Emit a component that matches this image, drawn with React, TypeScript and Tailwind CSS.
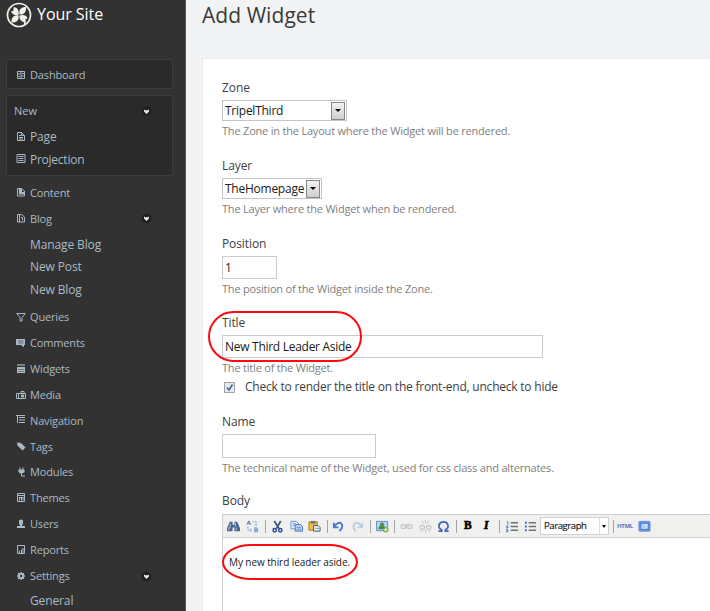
import type { ReactNode } from "react";

function Icon({ children }: { children: ReactNode }) {
  return (
    <svg width="11" height="11" viewBox="0 0 11 11" className="-mr-px shrink-0" fill="none" stroke="#a9bac5" strokeWidth="1">
      {children}
    </svg>
  );
}

const icons: Record<string, ReactNode> = {
  dashboard: <path d="M1.500 1.500h7v7h-7zM5 1.500v7M2 4h2.500M5.500 6h3M2.500 6.500h1.500M6 3.500h2" />,
  page: <path d="M1.500.500h4l3 3v5h-7zM5.500.500v3h3M3 3.500h2M3 5.500h4M3 7h4" />,
  projection: <path d="M1 .500h8v8H1zM2.500 2.500h5M2.500 4.500h5M2.500 6.500h5" />,
  content: (
    <>
      <path d="M1.500 1.500h4l3 2.500v5h-7z" />
      <path d="M3 2h3v3h2v2.500H3z" fill="#a9bac5" stroke="none" />
    </>
  ),
  blog: <path d="M1.500 1.500h4l3 2.500v5h-7zM3.500 2v7M5 4.500h1.500v3" />,
  queries: <path d="M.700 1.500h8.600L6 5.500v3.500H4V5.500z" />,
  comments: (
    <>
      <path d="M0 1h9v6H8v2.500L5 7H0z" fill="#a9bac5" stroke="none" />
      <path d="M2 3h5.500M2 5h5.500" stroke="#606c73" />
    </>
  ),
  widgets: (
    <>
      <path d="M1 1h8" strokeWidth="1.200" />
      <path d="M1 3h8v6H1z" fill="#a9bac5" stroke="none" />
      <path d="M2 5.500h6M2 7.500h6" stroke="#6c7b83" />
    </>
  ),
  media: (
    <>
      <path d="M.500 3.500h9v5H.500zM2.500 3v5.500M5 3V1.500h3V3" />
      <circle cx="6.500" cy="6" r="1.300" fill="#a9bac5" />
    </>
  ),
  navigation: <path d="M1.500 0v8M0 .500h9M3 2.500h6M3 5h6M3 7.500h6" />,
  tags: <path d="M1 1.500l4 .500 4.500 4.500L6.500 9.500l-5-5z" fill="#a9bac5" stroke="none" />,
  modules: (
    <>
      <path d="M4 .500v3M7 .500v3M5.500 6.500v2.500h3.500" />
      <path d="M2.500 2.500h6v2.500L6.500 6.500h-2.500L2.500 5z" fill="#a9bac5" stroke="none" />
    </>
  ),
  themes: <path d="M1.500 .500h7v8h-7zM2 2.500h6M3 4.500h4.500M3.500 4.500v3M5.500 4.500v3M7 4.500v3" />,
  users: <path d="M3 1.500Q5 -.500 7 1.500v3.500L6 6v1h3v2H1V7h3V6L3 5z" fill="#a9bac5" stroke="none" />,
  reports: (
    <>
      <path d="M1.500 .500h7v8h-7z" />
      <path d="M3.500 5.500v3M5.500 4.500v4M7 3v5.500" />
    </>
  ),
  settings: (
    <>
      <circle cx="5" cy="5" r="2.200" strokeWidth="2" />
      <path d="M5 1v2M5 7v2M1 5h2M7 5h2M2.100 2.100l1.400 1.400M6.500 6.500l1.400 1.400M7.900 2.100L6.500 3.500M3.500 6.500L2.100 7.900" strokeWidth="1.300" />
    </>
  ),
};

function Toggle() {
  return (
    <svg width="11" height="11" viewBox="0 0 11 11" className="ml-auto">
      <circle cx="5.500" cy="5.500" r="4.900" fill="#202023" />
      <path d="M3 3.500l1.300.700h2.400l1.300-.700v2L5.500 8 3 5.500z" fill="#e5e7e8" />
    </svg>
  );
}

function NavItem({ icon, label, toggle, className = "h-[25.850px] text-[11px]" }: { icon: string; label: string; toggle?: boolean; className?: string }) {
  return (
    <div className={`flex items-center pl-[16px] pr-[33px] tracking-[-.15px] ${className}`}>
      <Icon>{icons[icon]}</Icon>
      <span className="ml-1">{label}</span>
      {toggle && <Toggle />}
    </div>
  );
}

function SubItem({ label, className = "h-[22.500px]" }: { label: string; className?: string }) {
  return <div className={`flex items-center pl-[30px] text-[12px] tracking-[-.12px] ${className}`}>{label}</div>;
}

function Logo() {
  return (
    <svg width="26" height="26" viewBox="0 0 26 26">
      <circle cx="13" cy="13" r="11.500" fill="none" stroke="#f0f1e9" strokeWidth="1.700" />
      <g fill="#f0f1e9">
        <path d="M12.500 13C9.500 14 6 12.500 5 9.500c1-.5 2-.5 2.500-.5-.300-1 0-3 .500-4 4 1 5.500 4 4.500 8z" />
        <path d="M13.500 12.500c-1-5 1.500-7.500 6.500-7.500 .500 4.500-1.500 8-6.500 7.500z" />
        <path d="M12.500 13.500c1 4.500-2 7.500-7 7-.500-4.500 2.500-8 7-7z" />
        <path d="M13.500 13.500c4-1.500 7 0 8 2.500-.500 1-1 1-2 1 .500 1.500 0 2.500-.500 3.500-3.500-.500-6-3-5.500-7z" />
      </g>
      <path d="M17.500 18q2.500 2 1 5" fill="none" stroke="#f0f1e9" strokeWidth="1.500" />
    </svg>
  );
}

function Sidebar() {
  return (
    <aside className="h-[611px] w-[186px] shrink-0 overflow-hidden border-r border-[#56575a] bg-[#323232] text-[#a9bac5]">
      <div className="flex h-[59px] items-start pl-[6px] pt-[2px]">
        <Logo />
        <span className="ml-[5px] text-[16px] leading-[25px] tracking-[-.05px] text-white">Your Site</span>
      </div>
      <div className="ml-[6px] h-[30px] w-[167px] rounded-[2px] border border-[#3d3d40] bg-[#2a2a2a]">
        <NavItem icon="dashboard" label="Dashboard" className="-ml-[7px] h-[30px] text-[11px]" />
      </div>
      <div className="mb-[4px] ml-[6px] mt-[6px] h-[81px] w-[167px] rounded-[2px] border border-[#3d3d40] bg-[#2a2a2a]">
        <div className="flex h-[30px] items-center pl-[7px] pr-[20px] pt-px text-[11px]">New<Toggle /></div>
        <NavItem icon="page" label="Page" className="-ml-[7px] h-[22px] text-[12px]" />
        <NavItem icon="projection" label="Projection" className="-ml-[7px] h-[23px] text-[12px] tracking-[-.25px]" />
      </div>
      <NavItem icon="content" label="Content" />
      <NavItem icon="blog" label="Blog" toggle />
      <SubItem label="Manage Blog" className="mt-[2px] h-[22.500px]" />
      <SubItem label="New Post" />
      <SubItem label="New Blog" className="mb-[3.500px] h-[22.500px]" />
      <NavItem icon="queries" label="Queries" />
      <NavItem icon="comments" label="Comments" />
      <NavItem icon="widgets" label="Widgets" />
      <NavItem icon="media" label="Media" />
      <NavItem icon="navigation" label="Navigation" />
      <NavItem icon="tags" label="Tags" />
      <NavItem icon="modules" label="Modules" />
      <NavItem icon="themes" label="Themes" />
      <NavItem icon="users" label="Users" />
      <NavItem icon="reports" label="Reports" />
      <NavItem icon="settings" label="Settings" toggle />
      <SubItem label="General" className="mt-px h-[22.500px]" />
    </aside>
  );
}

function Label({ children }: { children: ReactNode }) {
  return <div className="h-[21px] text-[12px] leading-[18px] tracking-[-.1px] text-[#404040]">{children}</div>;
}

function Hint({ children }: { children: ReactNode }) {
  return <div className="text-[11px] leading-[20px] tracking-[-.2px] text-[#808080]">{children}</div>;
}

function Select({ value, className }: { value: string; className: string }) {
  return (
    <div className={`flex h-[21px] items-center justify-between border border-[#c2c4c6] bg-white pl-[3px] pr-px text-[12px] tracking-[-.25px] text-[#202020] ${className}`}>
      <span className="-ml-px">{value}</span>
      <span className="flex h-[18px] w-[14px] shrink-0 items-center justify-center border border-[#85878a] bg-linear-to-b from-[#f2f2f2] to-[#cfcfcf]">
        <svg width="6" height="3" viewBox="0 0 6 3"><path d="M0 0h6L3 3z" fill="#000" /></svg>
      </span>
    </div>
  );
}

function Tool({ children, className = "" }: { children: ReactNode; className?: string }) {
  return <svg width="13" height="13" viewBox="0 0 14 14" fill="none" className={`shrink-0 ${className}`}>{children}</svg>;
}

function Divider({ className }: { className: string }) {
  return <span className={`h-[13px] w-px shrink-0 bg-[#a0a3a8] ${className}`} />;
}

function Toolbar() {
  return (
    <div className="flex h-[23px] items-center border-b border-[#cfcfcf] bg-[#f0f0ee] pl-[4px]">
      <Tool>
        <path d="M3 2h3v3h2V2h3l3 7v3H8V8H6v4H0V9z" fill="#456692" />
        <path d="M2 8v3M4 4l-1 5M10 8v3M9 3v4" stroke="#bad0e9" />
      </Tool>
      <Tool className="ml-[6px]">
        <path d="M1 5l2-4 2 4M2 4h2" stroke="#456ba9" />
        <path d="M7 2h4v4M11 6L9 4M2 7v4h4M4 9l2 2-2 2" stroke="#779fe0" strokeDasharray="2 1" />
        <path d="M9.500 8v5M9.500 8.500H12v2H9.500h3v2h-3" stroke="#638dda" />
      </Tool>
      <Divider className="ml-[6px]" />
      <Tool className="ml-[5px]">
        <path d="M3.500 1l5 8M10.500 1L6 9" stroke="#415979" strokeWidth="2" />
        <circle cx="4" cy="11" r="1.800" stroke="#284b96" strokeWidth="1.600" /><circle cx="10" cy="11" r="1.800" stroke="#284b96" strokeWidth="1.600" />
      </Tool>
      <Tool className="ml-[6px]">
        <path d="M1 1.500h6l2 2v6H1z" fill="#e1ecfb" stroke="#6c94cd" />
        <path d="M5.500 5h6l2 2v5h-8z" fill="#bfd7f5" stroke="#466eb7" />
        <path d="M3 4h3M3 6h2M7 8h5M7 10h5" stroke="#6991cb" />
      </Tool>
      <Tool className="ml-[5px]">
        <path d="M1 2h9v9H1z" fill="#f1bd43" stroke="#a57a23" />
        <path d="M3 1h5v3H3z" fill="#737780" />
        <path d="M6 6h5l2 2v4H6z" fill="#e4effc" stroke="#4b515b" />
        <path d="M8 9h4" stroke="#7292bd" />
      </Tool>
      <Divider className="ml-[6px]" />
      <Tool className="ml-[4px]">
        <path d="M2 3v5h5M2.500 7Q7 1 10 4t-2 8" stroke="#4778ce" strokeWidth="2" />
      </Tool>
      <Tool className="ml-[6px] opacity-30">
        <path d="M12 3v5H7M11.500 7Q7 1 4 4t1 8" stroke="#477bc8" strokeWidth="2" />
      </Tool>
      <Divider className="ml-[6px]" />
      <Tool className="ml-[5px]">
        <path d="M.500 1.500h12v10H.500z" fill="#b0d3fa" stroke="#5c8ab8" />
        <path d="M2.500 10c0-3 2-4 4-4s4 1 4 4z" fill="#448b37" /><circle cx="6.500" cy="5" r="2.300" fill="#558b51" />
        <circle cx="10.500" cy="10.500" r="3" fill="#6bac38" /><path d="M8.500 10.500h4M10.500 8.500v4" stroke="#fff" />
      </Tool>
      <Divider className="ml-[5px]" />
      <Tool className="ml-[5px] opacity-35">
        <rect x="1" y="5" width="6" height="4" rx="2" stroke="#6d7889" strokeWidth="1.300" /><rect x="7" y="5" width="6" height="4" rx="2" stroke="#6d7889" strokeWidth="1.300" /><path d="M4 7h6" stroke="#6d7889" />
      </Tool>
      <Tool className="ml-[6px] opacity-35">
        <rect x="1" y="6" width="5" height="4" rx="2" stroke="#6d7889" strokeWidth="1.300" /><rect x="8" y="6" width="5" height="4" rx="2" stroke="#6d7889" strokeWidth="1.300" /><path d="M7 0v4M3 1l2 3M11 1L9 4M7 10v4M4 11l-2 2M10 11l2 2" stroke="#6d7889" />
      </Tool>
      <Tool className="ml-[5px]">
        <path d="M1.500 12H5v-1.500C0 8 2 2 7 2s7 6 2 8.500V12h3.500" stroke="#4067bb" strokeWidth="1.900" />
      </Tool>
      <Divider className="ml-[6px]" />
      <span className="ml-[7px] w-[10px] font-['Liberation_Serif',serif] text-[11.500px] font-bold leading-none text-black [-webkit-text-stroke:.6px_black]">B</span>
      <span className="ml-[10px] w-[9px] font-['Liberation_Serif',serif] text-[11.500px] font-bold italic leading-none text-black [-webkit-text-stroke:.6px_black]">I</span>
      <Divider className="ml-[6px]" />
      <Tool className="ml-[6px]">
        <path d="M5 3h8M5 7h8M5 11h8" stroke="#6d7277" strokeWidth="1.500" /><path d="M1 2h1v3M0 6.500h2v2H0M0 10.500h2v2H0" stroke="#3c6bc2" />
      </Tool>
      <Tool className="ml-[5px]">
        <path d="M5 3h8M5 7h8M5 11h8" stroke="#6d7277" strokeWidth="1.500" /><path d="M1 3h2M1 7h2M1 11h2" stroke="#3c6bc2" strokeWidth="2" />
      </Tool>
      <span className="ml-[3px] flex h-[18px] w-[69px] shrink-0 items-center border border-[#d1d1d1] bg-white pl-[3px] text-[9.500px] tracking-[-.4px] text-[#151515] [-webkit-text-stroke:.15px_#151515]">
        Paragraph
        <span className="ml-auto flex h-full w-[9px] items-center justify-center border-l border-[#dedede]">
          <svg width="4" height="3" viewBox="0 0 4 3"><path d="M0 0h4L2 3z" fill="#000" /></svg>
        </span>
      </span>
      <Divider className="ml-[4px]" />
      <span className="ml-[3px] w-[15px] text-[6px] font-bold leading-none tracking-[-.3px] text-[#4b79c7]">HTML</span>
      <Tool className="ml-[6px]">
        <rect x="1" y="1.500" width="12" height="10.500" rx="1" fill="#6b99e0" stroke="#668acb" />
        <path d="M3 3.500h8v6.500H3z" fill="#d6e7fd" stroke="#3a71c7" /><path d="M4 5.500h3M4 7.500h5" stroke="#8cb2ec" />
      </Tool>
    </div>
  );
}

export default function App() {
  return (
    <div className="relative flex h-[611px] w-[710px] overflow-hidden bg-[#f2f3f5] font-['Open_Sans',sans-serif]">
      <Sidebar />
      <main className="min-w-0 grow pl-[16px]">
        <h1 className="h-[58px] text-[21px] leading-[30px] tracking-[.06px] text-[#3b3b3b]">Add Widget</h1>
        <section className="h-[553px] border-l border-t border-[#eaeaec] bg-white pl-[19px] pt-[20px]">
          <div className="h-[78px]">
            <Label>Zone</Label>
            <Select value="TripelThird" className="w-[125px]" />
            <Hint>The Zone in the Layout where the Widget will be rendered.</Hint>
          </div>
          <div className="h-[78px]">
            <Label>Layer</Label>
            <Select value="TheHomepage" className="w-[100px]" />
            <Hint>The Layer where the Widget when be rendered.</Hint>
          </div>
          <div className="h-[79px]">
            <Label>Position</Label>
            <div className="flex h-[23px] w-[55px] items-center border border-[#cbcbcb] pl-[2px] text-[12px] text-[#272727]">1</div>
            <Hint>The position of the Widget inside the Zone.</Hint>
          </div>
          <div className="h-[99px]">
            <Label>Title</Label>
            <div className="flex h-[23px] w-[321px] items-center border border-[#cbcbcb] pl-[2px] text-[12px] tracking-[-.28px] text-[#202020]">New Third Leader Aside</div>
            <Hint>The title of the Widget.</Hint>
            <div className="flex h-[18px] items-center pl-[2px] text-[12px] tracking-[-.22px] text-[#404040]">
              <svg width="11" height="11" viewBox="0 0 11 11" fill="none">
                <path d="M.500.500h10v10H.500z" fill="#e7e9ed" stroke="#9ba1a7" />
                <path d="M3 5.500l2 2.500L8.500 2.500" stroke="#405f9d" strokeWidth="1.500" />
              </svg>
              <span className="ml-[10px]">Check to render the title on the front-end, uncheck to hide</span>
            </div>
          </div>
          <div className="h-[79px]">
            <Label>Name</Label>
            <div className="h-[24px] w-[154px] border border-[#cbcbcb]" />
            <Hint>The technical name of the Widget, used for css class and alternates.</Hint>
          </div>
          <Label>Body</Label>
          <div className="mt-px h-[110px] border-l border-t border-[#cfcfcf]">
            <Toolbar />
            <p className="pl-[6px] pt-[16px] text-[10px] leading-[16px] tracking-[-.08px] text-[#191919]">My new third leader aside.</p>
          </div>
        </section>
      </main>
      <div className="absolute left-[208px] top-[311px] h-[51px] w-[154px] rounded-[26px] border-2 border-[#f80c10]" />
      <div className="absolute left-[222px] top-[544px] h-[36px] w-[136px] border-2 border-[#f80c10] [border-radius:29px/18px]" />
    </div>
  );
}
